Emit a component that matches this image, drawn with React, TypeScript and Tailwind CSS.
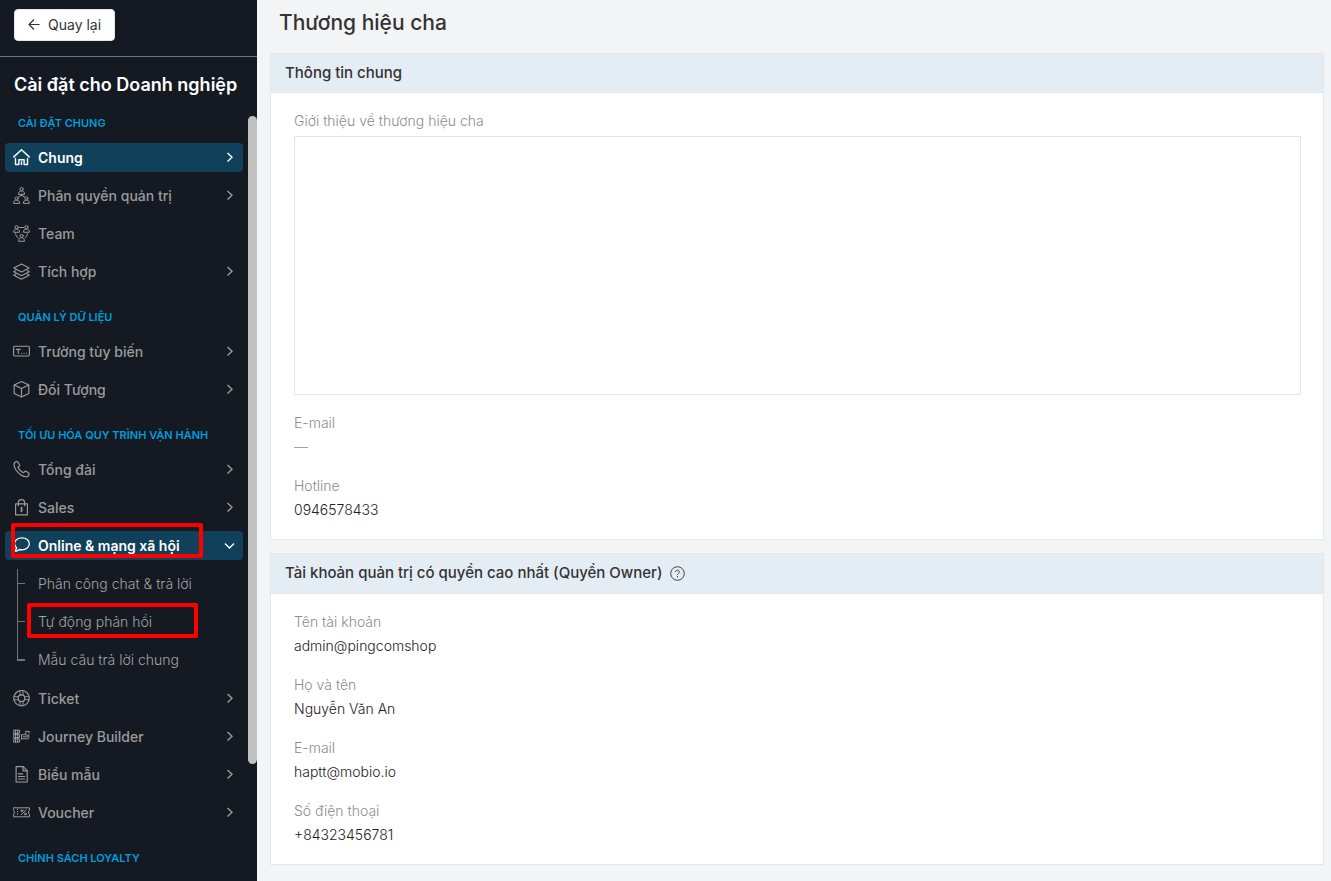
import * as React from 'react';
import { clsx } from 'clsx';

type IconProps = { children: React.ReactNode; thin?: boolean };

function Icon({ children, thin }: IconProps) {
  return (
    <svg
      viewBox="0 0 17 17"
      className="h-[17px] w-[17px] shrink-0"
      fill="none"
      stroke="currentColor"
      strokeWidth={thin ? 1 : 1.15}
      strokeLinejoin="round"
      strokeLinecap="round"
      aria-hidden="true"
    >
      {children}
    </svg>
  );
}

const icons = {
  home: (
    <Icon>
      <path d="M.8 7.900 8.500.8l7.700 7.100" strokeWidth="1.5" />
      <path d="M2.500 9.500v6h3.400v-4.700h5.200v4.700h3.400v-6" strokeWidth="1.4" />
      <path d="M8.500 12.800v2.700" strokeWidth="1.4" />
    </Icon>
  ),
  roles: (
    <Icon thin>
      <circle cx="8.5" cy="2.1" r="1.6" />
      <path d="M5.500 7c0-2.100 1.100-3 3-3s3 .9 3 3zM8.500 7.200v1.600M5.400 9.900l3.100-1.600 3.100 1.600" />
      <circle cx="3.600" cy="11.400" r="1.5" />
      <path d="M.6 16c0-1.900 1.100-2.800 3-2.800s3 .9 3 2.800z" />
      <circle cx="13.400" cy="11.400" r="1.5" />
      <path d="M10.400 16c0-1.900 1.100-2.800 3-2.800s3 .9 3 2.800z" />
    </Icon>
  ),
  team: (
    <Icon thin>
      <circle cx="3.600" cy="2.200" r="1.6" />
      <path d="M.7 6.900c0-2 1-2.900 2.900-2.900s2.900.9 2.900 2.900z" />
      <circle cx="13.400" cy="2.200" r="1.6" />
      <path d="M10.500 6.900c0-2 1-2.900 2.900-2.900s2.900.9 2.900 2.900z" />
      <circle cx="8.500" cy="10.900" r="1.6" />
      <path d="M5.600 15.900c0-2.100 1-3.100 2.900-3.100s2.900 1 2.900 3.100zM6.500 2.500h4M2.600 8.700c.2 1.800 1 3.200 2.500 4.200M14.400 8.700c-.2 1.800-1 3.200-2.500 4.200" />
    </Icon>
  ),
  layers: (
    <Icon>
      <path d="M8.5.9.8 4.9l7.7 4 7.7-4z" />
      <path d="M2.8 7.6.8 8.7l7.7 4 7.7-4-2-1.1" />
      <path d="M2.8 11.1.8 12.2l7.7 4 7.7-4-2-1.1" />
    </Icon>
  ),
  field: (
    <Icon>
      <rect x=".6" y="3.2" width="15.8" height="9.8" rx="1.2" />
      <path d="M3.400 6.300h3.800M5.300 6.300v4" />
      <path d="M8.600 10.200h.2M11 10.200h.2M13.400 10.200h.2" />
    </Icon>
  ),
  box: (
    <Icon>
      <path d="M8.500.6 1.200 4.100v8.400l7.300 3.500 7.300-3.500V4.100z" />
      <path d="m1.200 4.100 7.300 3.400 7.300-3.400M8.500 7.500V16" />
    </Icon>
  ),
  phone: (
    <Icon>
      <path d="M3.700.5C2.400.8.9 2.200 1 3.800c.2 2.900 2 5.700 4.200 7.800 2.100 2.200 4.700 4 7.600 4.200 1.600.1 3-1.400 3.300-2.700.1-.4-.1-.8-.4-1L13 10.300c-.4-.3-.9-.2-1.200.1l-1 1.100c-.2.3-.6.3-.9.1-1.800-1-3.700-2.900-4.700-4.700-.2-.3-.1-.7.1-.9l1.100-1c.3-.3.4-.8.1-1.200L4.700.9c-.2-.3-.6-.5-1-.4z" />
    </Icon>
  ),
  bag: (
    <Icon>
      <path d="M2.600 4.900h11.800v10.900H2.600zM5.400 6.700V3.400C5.400 1.700 6.600.6 8.500.6s3.100 1.100 3.100 2.800v3.300" />
      <path d="M9.700 9.100c-1.200-.7-2.500-.2-2.300.6.2.9 2.300.6 2.300 1.600 0 .9-1.400 1.200-2.500.6M8.500 8.200v4.700" strokeWidth=".9" />
    </Icon>
  ),
  chat: (
    <Icon>
      <path
        d="M9 .9C4.800.9 1.500 3.300 1.500 6.600c0 1.700.8 3.100 2.100 4.100-.2 1.400-.9 2.700-2.100 3.700 2 0 3.700-.7 4.900-1.900.8.2 1.700.3 2.600.3 4.200 0 7.300-2.700 7.300-6.100S13.200.9 9 .9z"
        strokeWidth="1.3"
      />
    </Icon>
  ),
  ticket: (
    <Icon>
      <circle cx="8.5" cy="8.200" r="7.700" />
      <circle cx="8.500" cy="8.200" r="3.300" />
      <path
        d="M7 .8v4.500M10 .8v4.500M7 11.200v4.500M10 11.200v4.500M.9 6.700h4.600M.9 9.700h4.600M11.500 6.700h4.600M11.500 9.700h4.600"
        strokeWidth=".9"
      />
    </Icon>
  ),
  journey: (
    <Icon thin>
      <path d="M.6 2.200h6v3h-6zM.6 6.600h6v3h-6zM.6 11h6v3h-6zM2.500 2.200V14M4.700 2.200V14" />
      <path d="M8.600 6.800h3l1.600-2.800M8.600 10.800h6.200c.8 0 1-.6 1-1.200V7h-3.400M8.600 6.800v4M10.400 8.800h4M12.600 3.400h3.600v1.700" />
    </Icon>
  ),
  form: (
    <Icon>
      <path d="M3.100.6h7.100l4 4V16H3.100z" />
      <path d="M10 .7v4.100h4.100M5.400 7.900h4.200M5.400 10.500h6.300M5.400 13h6.300" />
    </Icon>
  ),
  voucher: (
    <Icon thin>
      <path d="M.6 3.800h15.800v2.800l-.8.500v2.400l.8.500v2.800H.6V10l.8-.5V7.100l-.8-.5z" />
      <path d="M4.600 5v.6M4.600 7.400V8M4.600 9.800v.6M8.200 10.800l4.800-5" />
      <circle cx="8.800" cy="6.700" r="1" />
      <circle cx="12.400" cy="10" r="1" />
    </Icon>
  ),
};

type MenuItem = {
  label: string;
  icon: keyof typeof icons;
  active?: boolean;
  leaf?: boolean;
  marked?: boolean;
  children?: { label: string; marked?: boolean }[];
};

const groups: { title: string; items: MenuItem[] }[] = [
  {
    title: 'CÀI ĐẶT CHUNG',
    items: [
      { label: 'Chung', icon: 'home', active: true },
      { label: 'Phân quyền quản trị', icon: 'roles' },
      { label: 'Team', icon: 'team', leaf: true },
      { label: 'Tích hợp', icon: 'layers' },
    ],
  },
  {
    title: 'QUẢN LÝ DỮ LIỆU',
    items: [
      { label: 'Trường tùy biến', icon: 'field' },
      { label: 'Đối Tượng', icon: 'box' },
    ],
  },
  {
    title: 'TỐI ƯU HÓA QUY TRÌNH VẬN HÀNH',
    items: [
      { label: 'Tổng đài', icon: 'phone' },
      { label: 'Sales', icon: 'bag' },
      {
        label: 'Online & mạng xã hội',
        icon: 'chat',
        active: true,
        marked: true,
        children: [
          { label: 'Phân công chat & trả lời' },
          { label: 'Tự động phản hồi', marked: true },
          { label: 'Mẫu câu trả lời chung' },
        ],
      },
      { label: 'Ticket', icon: 'ticket' },
      { label: 'Journey Builder', icon: 'journey' },
      { label: 'Biểu mẫu', icon: 'form' },
      { label: 'Voucher', icon: 'voucher' },
    ],
  },
  { title: 'CHÍNH SÁCH LOYALTY', items: [] },
];

function Chevron({ open }: { open?: boolean }) {
  return (
    <svg
      viewBox="0 0 12 12"
      className="mr-2 h-3 w-3 shrink-0"
      fill="none"
      stroke="currentColor"
      strokeWidth="1.400"
      aria-hidden="true"
    >
      <path d={open ? 'm2 3.500 4.500 4.500L11 3.500' : 'm4.500 1 4.500 4.300-4.500 4.200'} />
    </svg>
  );
}

function NavItem({ item }: { item: MenuItem }) {
  return (
    <li>
      <a
        href="#"
        className={clsx(
          'relative flex h-[29px] items-center gap-2 rounded pl-2 text-sm',
          item.active ? 'bg-[#10405a] font-semibold text-white' : 'font-medium text-[#9b9b9b]',
        )}
      >
        {icons[item.icon]}
        <span className="flex-1">{item.label}</span>
        {!item.leaf && <Chevron open={!!item.children} />}
        {item.marked && (
          <span className="absolute -top-2 left-1.5 h-[35px] w-48 rounded-xs border-4 border-[#ff0000]" />
        )}
      </a>
      {item.children && (
        <ul className="relative flex flex-col gap-[9px] pt-[9px] pb-px">
          <li aria-hidden="true" className="absolute top-[9px] left-3 h-[92px] w-px bg-[#6f7480]" />
          {item.children.map((child) => (
            <li key={child.label} className="group">
              <a
                href="#"
                className="relative flex h-[29px] items-center gap-[13px] pl-3 text-sm font-light text-[#a3a3a3]"
              >
                <span className="h-px w-2 bg-[#6f7480] group-last:h-0.5" />
                {child.label}
                {child.marked && (
                  <span className="absolute -top-1 left-[22px] h-[35px] w-[171px] rounded-xs border-4 border-[#ff0000]" />
                )}
              </a>
            </li>
          ))}
        </ul>
      )}
    </li>
  );
}

function Sidebar() {
  return (
    <aside className="flex w-[257px] shrink-0 flex-col bg-[#151a22]">
      <div className="border-b border-[#6f7480] px-3.5 pt-[9px] pb-[15px]">
        <button
          type="button"
          className="flex h-8 items-center gap-2 rounded border border-[#e2e4ee] bg-white px-[13px] text-sm text-[#333333]"
        >
          <svg viewBox="0 0 12 12" className="h-3 w-3" fill="none" stroke="currentColor" strokeWidth="1.2" aria-hidden="true">
            <path d="M11.500 5.500H1M6 .5l-5 5 5 5" />
          </svg>
          Quay lại
        </button>
      </div>
      <h2 className="px-3.5 pt-4 text-lg leading-6 font-semibold whitespace-nowrap text-white">
        Cài đặt cho Doanh nghiệp
      </h2>
      <div className="flex pt-4">
        <nav className="flex flex-1 flex-col gap-[21px] px-[5px]">
          {groups.map((group) => (
            <section key={group.title}>
              <h3 className="pl-[13px] text-[11px] leading-5 font-semibold whitespace-nowrap text-[#009cdb]">
                {group.title}
              </h3>
              {group.items.length > 0 && (
                <ul className="mt-2.5 flex flex-col gap-[9px]">
                  {group.items.map((item) => (
                    <NavItem key={item.label} item={item} />
                  ))}
                </ul>
              )}
            </section>
          ))}
        </nav>
        <div className="mt-[3px] h-[648px] w-[9px] rounded-full bg-[#c1c1c1]" />
      </div>
    </aside>
  );
}

function Card({ title, hint, children }: { title: string; hint?: boolean; children: React.ReactNode }) {
  return (
    <section className="border border-[#e4e6ec] bg-white">
      <h2
        className={clsx(
          'flex items-center gap-2 border-b border-[#e4e6ec] bg-[#e4ecf4] px-3.5 text-[15px] font-medium text-[#333333]',
          hint ? 'h-10' : 'h-[39px]',
        )}
      >
        {title}
        {hint && (
          <button type="button" aria-label="Trợ giúp" className="h-4 w-4">
            <svg viewBox="0 0 16 16" className="h-4 w-4" fill="none" stroke="#444444" aria-hidden="true">
              <circle cx="7.500" cy="7.500" r="6.800" />
              <path d="M5.600 6c0-2.400 3.800-2.400 3.800-.1 0 1.300-1.900 1.400-1.900 2.900M7.500 10v1.300" />
            </svg>
          </button>
        )}
      </h2>
      <div className="flex flex-col pt-[18px] pr-[22px] pb-[19px] pl-[23px] text-sm leading-5 font-light">
        {children}
      </div>
    </section>
  );
}

function Details({ rows }: { rows: [string, string][] }) {
  return (
    <dl className="flex flex-col gap-[19px]">
      {rows.map(([label, value]) => (
        <div key={label} className="flex flex-col gap-1">
          <dt className="text-[#8c8c8c]">{label}</dt>
          <dd className={value === '—' ? 'text-[#8c8c8c]' : 'text-[#222222]'}>{value}</dd>
        </div>
      ))}
    </dl>
  );
}

export default function App() {
  return (
    <div className="flex h-screen overflow-hidden bg-[#f3f4f6] font-['Inter','Liberation_Sans',sans-serif]">
      <Sidebar />
      <main className="min-w-0 flex-1 pr-[7px] pl-[13px]">
        <h1 className="px-[9px] pt-[9px] pb-4 text-[21px] leading-7 font-medium text-[#333333]">Thương hiệu cha</h1>
        <div className="flex flex-col gap-[13px]">
          <Card title="Thông tin chung">
            <label htmlFor="brand-intro" className="text-[#8c8c8c]">
              Giới thiệu về thương hiệu cha
            </label>
            <textarea
              id="brand-intro"
              className="mt-[5px] mb-[18px] h-[259px] w-full resize-none border border-[#e2e4ee] bg-white p-2 outline-none"
            />
            <Details
              rows={[
                ['E-mail', '—'],
                ['Hotline', '0946578433'],
              ]}
            />
          </Card>
          <Card title="Tài khoản quản trị có quyền cao nhất (Quyền Owner)" hint>
            <Details
              rows={[
                ['Tên tài khoản', 'admin@pingcomshop'],
                ['Họ và tên', 'Nguyễn Văn An'],
                ['E-mail', 'haptt@mobio.io'],
                ['Số điện thoại', '+84323456781'],
              ]}
            />
          </Card>
        </div>
      </main>
    </div>
  );
}
